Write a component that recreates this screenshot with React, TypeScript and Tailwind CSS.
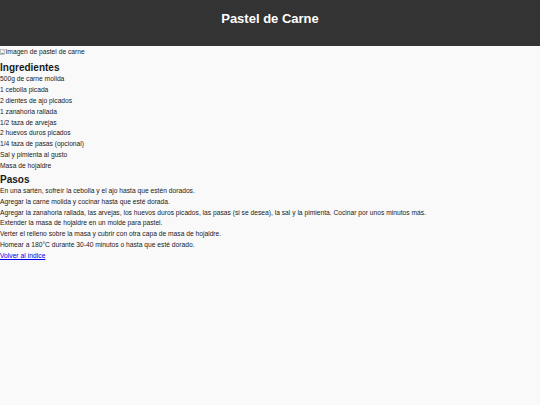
export default function App() {
  const ingredientes = [
    "500g de carne molida",
    "1 cebolla picada",
    "2 dientes de ajo picados",
    "1 zanahoria rallada",
    "1/2 taza de arvejas",
    "2 huevos duros picados",
    "1/4 taza de pasas (opcional)",
    "Sal y pimienta al gusto",
    "Masa de hojaldre",
  ];
  const pasos = [
    "En una sartén, sofreír la cebolla y el ajo hasta que estén dorados.",
    "Agregar la carne molida y cocinar hasta que esté dorada.",
    "Agregar la zanahoria rallada, las arvejas, los huevos duros picados, las pasas (si se desea), la sal y la pimienta. Cocinar por unos minutos más.",
    "Extender la masa de hojaldre en un molde para pastel.",
    "Verter el relleno sobre la masa y cubrir con otra capa de masa de hojaldre.",
    "Homear a 180°C durante 30-40 minutos o hasta que esté dorado.",
  ];

  return (
    <div className="min-h-[405px] bg-[#f9f9f9] text-[#1a1a1a] font-['Liberation_Sans',Arial,sans-serif]">
      <header className="h-[46px] bg-[#333333] flex items-center justify-center pb-[8px]">
        <h1 className="text-white text-[13px] font-bold">Pastel de Carne</h1>
      </header>

      <div className="mt-[1.5px] h-[8px] flex items-center text-[6.7px] leading-[8px] text-[#222]">
        <svg width="5" height="6" viewBox="0 0 5 6" className="shrink-0 mr-[0.5px]">
          <rect x="0.4" y="0.4" width="4.2" height="5.2" fill="#fff" stroke="#9a9a9a" strokeWidth="0.6" />
          <path d="M0.8 5 L2 3.3 L3.2 4.4 L4.2 3.6 V5 Z" fill="#5a9" />
          <circle cx="3.3" cy="1.7" r="0.6" fill="#c9a" />
        </svg>
        <span>Imagen de pastel de carne</span>
      </div>

      <h2 className="mt-[5.5px] text-[10px] leading-[13.4px] font-bold">Ingredientes</h2>
      <ul>
        {ingredientes.map((i) => (
          <li key={i} className="text-[6.7px] leading-[10.8px]">
            {i}
          </li>
        ))}
      </ul>

      <h2 className="mt-[1px] text-[10px] leading-[13.4px] font-bold">Pasos</h2>
      <ol>
        {pasos.map((p) => (
          <li key={p} className="text-[6.7px] leading-[10.8px]">
            {p}
          </li>
        ))}
      </ol>
      <a href="#" className="block text-[6.7px] leading-[10.8px] text-[#0000ee] underline">
        Volver al índice
      </a>
    </div>
  );
}
